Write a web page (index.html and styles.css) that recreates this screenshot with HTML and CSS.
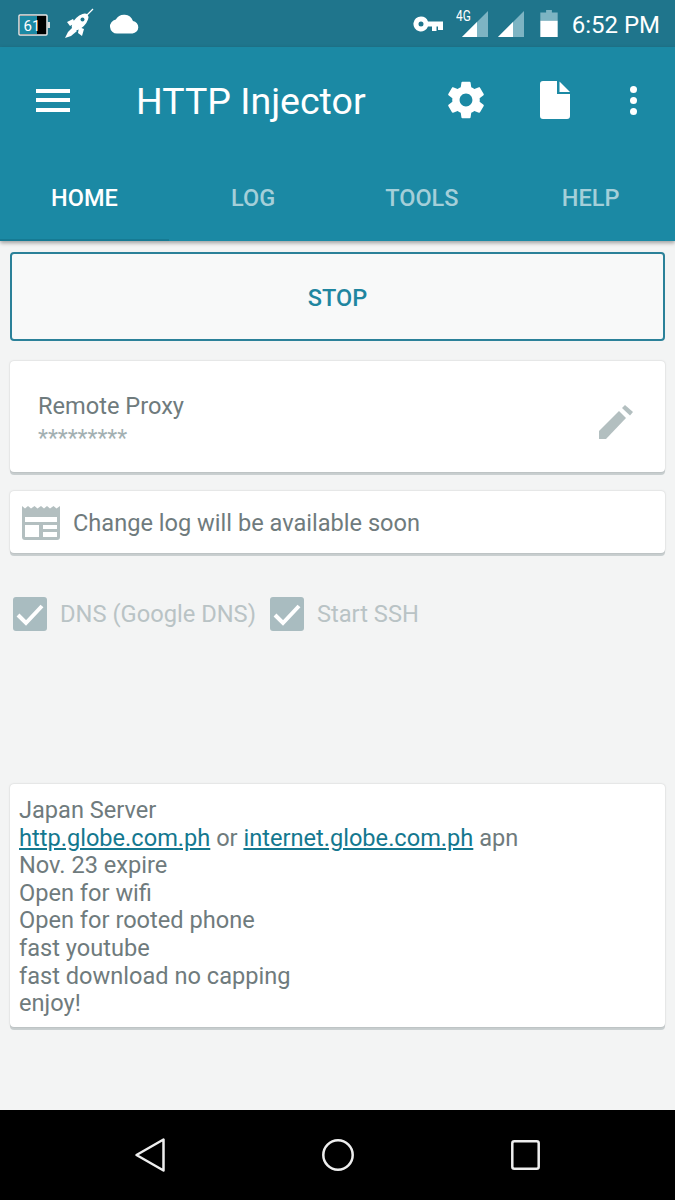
FILE: index.html
```html
<!DOCTYPE html>
<html lang="en">
  <head>
    <meta charset="UTF-8" />
    <meta name="viewport" content="width=device-width, initial-scale=1.0" />
    <title>HTTP Injector</title>
    <link rel="stylesheet" href="styles.css">
  </head>
  <body>
    <div class="phone">
      <div class="status-bar">
        <div class="status-left">
          <svg class="ic-batt" viewBox="0 0 32 22"><rect x="1" y="1" width="28" height="20" rx="1" fill="#000" stroke="#e8e8e8" stroke-width="1.500"/><rect x="2" y="2" width="17" height="18" fill="#1b89a4"/><rect x="29.500" y="8" width="2.500" height="6" fill="#ddd"/><text x="14" y="17" class="batt-num">61</text></svg>
          <svg class="ic-rocket" viewBox="0 0 32 32"><ellipse cx="16" cy="14" rx="10.500" ry="5.500" transform="rotate(-45 16 14)" fill="#fff"/><circle cx="18.500" cy="11.500" r="2" fill="#1f758c"/><path d="M9 11L3 14l3 4 5-3zM20 21l-2 7-4-3 1-6z" fill="#fff"/><path d="M9 19l4 4-6 5-6 2 3-6z" fill="#fff"/><path d="M22 8l7-7" stroke="#fff" stroke-width="1.300"/></svg>
          <svg class="ic-cloud" viewBox="0 0 30 21"><path d="M8 20.500a7 7 0 0 1-1.200-13.900A9.500 9.500 0 0 1 24 8a6.300 6.300 0 0 1-.5 12.500z" fill="#fff"/></svg>
        </div>
        <div class="status-right">
          <svg class="ic-key" viewBox="0 0 30 16"><path d="M8 .5a7.500 7.500 0 1 0 7 10H19v4.500h4.500v-4.500H25v3.500h5V5.500H15A7.500 7.500 0 0 0 8 .5zm0 5a2.500 2.500 0 1 1 0 5 2.500 2.500 0 0 1 0-5z" fill="#fff"/></svg>
          <div class="signal signal-4g">
            <span class="net-label">4G</span>
            <svg viewBox="0 0 26 26"><path d="M26 0v26H0z" fill="#7db4c3"/><path d="M15 11v15H0z" fill="#fff"/></svg>
          </div>
          <svg class="signal-plain" viewBox="0 0 26 26"><path d="M26 0v26H0z" fill="#7db4c3"/><path d="M15 11v15H0z" fill="#fff"/></svg>
          <svg class="ic-battery" viewBox="0 0 18 28"><path d="M6 0h6v2.500h6V11H0V2.500h6z" fill="#7db4c3"/><rect y="11" width="18" height="17" fill="#fff"/></svg>
          <span class="clock">6:52 PM</span>
        </div>
      </div>

      <header class="app-bar">
        <div class="toolbar">
          <div class="menu-icon"><i></i><i></i><i></i></div>
          <h1 class="title">HTTP Injector</h1>
          <svg class="ic-gear" viewBox="0 0 24 24"><path fill="#fff" d="M19.430 12.980c.04-.32.07-.64.07-.98s-.03-.66-.07-.98l2.110-1.650c.19-.15.24-.42.12-.64l-2-3.460c-.12-.22-.39-.3-.61-.22l-2.490 1c-.52-.4-1.080-.73-1.690-.98l-.38-2.650C14.460 2.180 14.250 2 14 2h-4c-.25 0-.46.18-.49.420l-.38 2.650c-.61.25-1.170.59-1.690.98l-2.490-1c-.23-.09-.49 0-.61.22l-2 3.460c-.13.22-.07.49.12.64l2.110 1.650c-.04.32-.07.650-.07.980s.03.660.07.980l-2.110 1.650c-.19.150-.24.420-.12.640l2 3.460c.12.220.39.300.61.220l2.490-1c.52.400 1.080.730 1.690.980l.38 2.650c.03.240.24.420.49.420h4c.25 0 .46-.18.49-.42l.38-2.650c.61-.25 1.170-.59 1.690-.98l2.490 1c.23.090.49 0 .61-.22l2-3.460c.12-.22.070-.49-.12-.64l-2.110-1.650zM12 15.500c-1.930 0-3.500-1.570-3.500-3.500s1.570-3.500 3.500-3.500 3.500 1.570 3.500 3.500-1.570 3.500-3.500 3.500z"/></svg>
          <svg class="ic-file" viewBox="0 0 30 38"><path fill="#fff" d="M3 0h14v13h13v22a3 3 0 0 1-3 3H3a3 3 0 0 1-3-3V3a3 3 0 0 1 3-3z"/><path fill="#fff" d="M19.500 .5L30 11H19.500z"/></svg>
          <div class="dots"><i></i><i></i><i></i></div>
        </div>
        <nav class="tabs">
          <a class="tab active">HOME</a>
          <a class="tab">LOG</a>
          <a class="tab">TOOLS</a>
          <a class="tab">HELP</a>
        </nav>
      </header>

      <main class="content">
        <button class="stop-btn">STOP</button>

        <section class="card proxy-card">
          <div>
            <div class="proxy-name">Remote Proxy</div>
            <div class="proxy-pass">*********</div>
          </div>
          <svg class="ic-pencil" viewBox="0 0 34 34"><path fill="#b3bfc0" d="M0 34v-8L20 6l7 7L7 34z"/><path fill="#b3bfc0" d="M23 3l3-3 8 7-3 3.500z"/></svg>
        </section>

        <section class="card notice-card">
          <svg class="ic-news" viewBox="0 0 38 34"><path fill="#b3bfc0" d="M0 0l3 2.500L6 0l3 2.500L12.500 0l3 2.500L19 0l3 2.500L25 0l3 2.500L31.500 0l3 2.500L38 0v31a3 3 0 0 1-3 3H3a3 3 0 0 1-3-3z"/><rect x="3" y="11" width="32" height="5" fill="#fff"/><rect x="3" y="19" width="14" height="12" fill="#fff"/><rect x="21" y="19" width="14" height="4" fill="#fff"/><rect x="21" y="26" width="14" height="5" fill="#fff"/></svg>
          <span>Change log will be available soon</span>
        </section>

        <div class="options">
          <label class="option">
            <svg class="ic-check" viewBox="0 0 34 34"><rect width="34" height="34" rx="3" fill="#a9bcc0"/><path d="M5 18l8 8L29 9" fill="none" stroke="#fff" stroke-width="4"/></svg>
            <span>DNS (Google DNS)</span>
          </label>
          <label class="option">
            <svg class="ic-check" viewBox="0 0 34 34"><rect width="34" height="34" rx="3" fill="#a9bcc0"/><path d="M5 18l8 8L29 9" fill="none" stroke="#fff" stroke-width="4"/></svg>
            <span>Start SSH</span>
          </label>
        </div>

        <section class="card note-card">
          <div>Japan Server</div>
          <div><a href="#">http.globe.com.ph</a> or <a href="#">internet.globe.com.ph</a> apn</div>
          <div>Nov. 23 expire</div>
          <div>Open for wifi</div>
          <div>Open for rooted phone</div>
          <div>fast youtube</div>
          <div>fast download no capping</div>
          <div>enjoy!</div>
        </section>
      </main>

      <footer class="nav-bar">
        <svg class="nav-back" viewBox="0 0 30 34"><path d="M28.500 1.500v31L1.500 17z" fill="none" stroke="#eee" stroke-width="2.500" stroke-linejoin="round"/></svg>
        <svg class="nav-home" viewBox="0 0 32 32"><circle cx="16" cy="16" r="14.700" fill="none" stroke="#eee" stroke-width="2.500"/></svg>
        <svg class="nav-recent" viewBox="0 0 29 30"><rect x="1.300" y="1.300" width="26.400" height="27.400" rx="2" fill="none" stroke="#eee" stroke-width="2.500"/></svg>
      </footer>
    </div>
  </body>
</html>
```

FILE: styles.css
```css
* {
  box-sizing: border-box;
}
html,
body {
  margin: 0;
  padding: 0;
}
body {
  font-family: Roboto, "Liberation Sans", sans-serif;
  background-color: #f3f4f4;
}
svg {
  display: block;
  flex: none;
}
.phone {
  width: 675px;
  height: 1200px;
  display: flex;
  flex-direction: column;
  overflow: hidden;
}

/* status bar */
.status-bar {
  height: 47px;
  background-color: #1f758c;
  display: flex;
  justify-content: space-between;
  align-items: center;
  padding: 0 15px 0 18px;
  color: #fff;
}
.status-left,
.status-right {
  display: flex;
  align-items: center;
}
.ic-batt {
  width: 32px;
  height: 22px;
  margin: 2px 14px 0 0;
}
.batt-num {
  font-size: 15px;
  fill: #fff;
  text-anchor: middle;
}
.ic-rocket {
  width: 32px;
  height: 32px;
  margin-right: 13px;
}
.ic-cloud {
  width: 30px;
  height: 21px;
}
.ic-key {
  width: 30px;
  height: 16px;
}
.signal {
  position: relative;
  width: 26px;
  height: 26px;
  margin: 0 10px 0 19px;
}
.signal svg {
  width: 26px;
  height: 26px;
}
.net-label {
  position: absolute;
  left: -6px;
  top: -3px;
  font-size: 14px;
  line-height: 16px;
  transform: scaleX(0.85);
  transform-origin: left;
}
.signal-plain {
  width: 26px;
  height: 26px;
  margin-right: 16px;
}
.ic-battery {
  width: 18px;
  height: 27px;
  margin: -1px 14px 0 0;
}
.clock {
  font-size: 24px;
  padding-top: 3px;
}

/* app bar */
.app-bar {
  height: 194px;
  background-color: #1b89a4;
  box-shadow: 0 2px 4px rgba(0, 0, 0, 0.35);
  display: flex;
  flex-direction: column;
  color: #fff;
  position: relative;
}
.toolbar {
  height: 108px;
  display: flex;
  align-items: center;
  padding-bottom: 2px;
}
.menu-icon {
  width: 34px;
  margin-left: 36px;
  display: flex;
  flex-direction: column;
  gap: 5.500px;
}
.menu-icon i {
  height: 4px;
  background-color: #fff;
}
.title {
  font-size: 37.500px;
  font-weight: 400;
  margin: 2px 0 0 66px;
  width: 309px;
}
.ic-gear {
  width: 44px;
  height: 44px;
  margin-left: -1px;
}
.ic-file {
  width: 30px;
  height: 38px;
  margin-left: 52px;
}
.dots {
  margin-left: 60px;
  display: flex;
  flex-direction: column;
  gap: 4px;
}
.dots i {
  width: 7px;
  height: 7px;
  border-radius: 50%;
  background-color: #fff;
}
.tabs {
  flex: 1;
  display: flex;
}
.tab {
  flex: 1;
  text-align: center;
  font-size: 23.500px;
  font-weight: 500;
  line-height: 86px;
  color: #a4cfd9;
}
.tab.active {
  color: #fff;
  box-shadow: inset 0 -2px 0 #167a93;
}

/* content */
.content {
  flex: 1;
  padding: 11px 10px 0;
  display: flex;
  flex-direction: column;
}
.stop-btn {
  height: 89px;
  background-color: #f8f9f9;
  border: 2px solid #2b8199;
  border-radius: 4px;
  color: #1f86a0;
  font-family: inherit;
  font-size: 23.500px;
  font-weight: 500;
  padding: 2px 0 0;
}
.card {
  background-color: #fff;
  border-radius: 4px;
  box-shadow: 0 0 2px rgba(0, 0, 0, 0.2), 0 3px 0 #c9cfd0;
  color: #6f7b7d;
}
.proxy-card {
  height: 111px;
  margin-top: 20px;
  padding: 8px 32px 0 28px;
  display: flex;
  justify-content: space-between;
  align-items: center;
}
.proxy-name {
  font-size: 23.600px;
  line-height: 30px;
  margin-bottom: 6px;
}
.proxy-pass {
  font-size: 23px;
  line-height: 24px;
  color: #a3b0b2;
}
.ic-pencil {
  width: 34px;
  height: 34px;
  margin-top: 2px;
}
.notice-card {
  height: 62px;
  margin-top: 19px;
  padding: 2px 12px 0;
  display: flex;
  align-items: center;
  gap: 13px;
  font-size: 23.600px;
}
.ic-news {
  width: 38px;
  height: 34px;
}
.options {
  margin-top: 44px;
  height: 34px;
  padding-left: 3px;
  display: flex;
  gap: 14px;
}
.option {
  display: flex;
  align-items: center;
  gap: 13px;
  font-size: 23.700px;
  color: #b9c3c5;
}
.ic-check {
  width: 34px;
  height: 34px;
}
.note-card {
  height: 243px;
  margin-top: 153px;
  padding: 13px 9px;
  font-size: 23.600px;
  line-height: 27.600px;
}
.note-card a {
  color: #14788f;
}

/* navigation */
.nav-bar {
  height: 90px;
  background-color: #000;
  display: flex;
  align-items: center;
  padding-bottom: 1px;
}
.nav-back {
  width: 30px;
  height: 34px;
  margin-left: 135px;
}
.nav-home {
  width: 32px;
  height: 32px;
  margin-left: 157px;
}
.nav-recent {
  width: 29px;
  height: 30px;
  margin-left: 157px;
}
```
